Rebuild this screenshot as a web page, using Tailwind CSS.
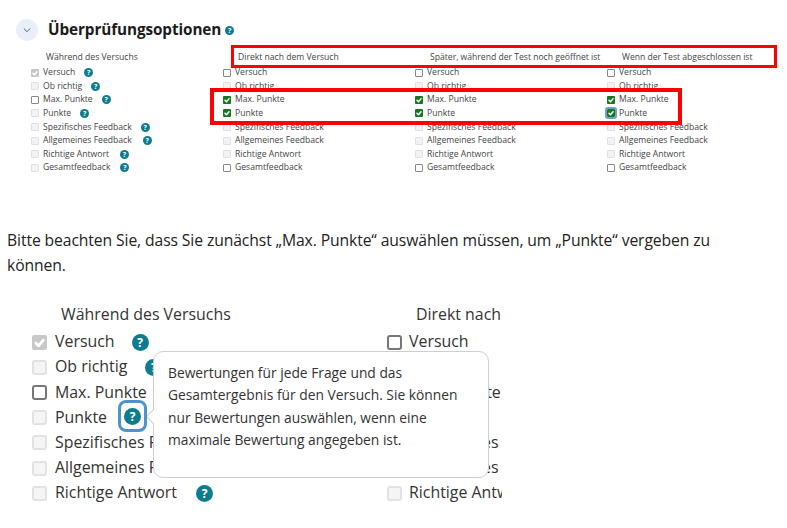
<!doctype html>
<html>
<head>
  <meta charset="UTF-8">
  <meta name="viewport" content="width=device-width, initial-scale=1.0">
  <script src="https://cdn.jsdelivr.net/npm/@tailwindcss/browser@4"></script>
</head>
<body class="bg-white">
  <div class="relative w-[787px] h-[528px] overflow-hidden font-['Open_Sans',sans-serif] text-[#2b2b2b]">

    <!-- Heading -->
    <div class="flex items-center h-[22px] mt-[19px] ml-[16px]">
      <div class="w-[22px] h-[22px] rounded-full bg-[#e9eff8] flex items-center justify-center">
        <svg class="w-[10px] h-[10px] text-[#1f4f9c]" fill="none" stroke="currentColor" stroke-width="2" stroke-linecap="round" stroke-linejoin="round" viewBox="0 0 24 24"><path d="M5 9l7 7 7-7"></path></svg>
      </div>
      <span class="ml-[10px] text-[15.3px] leading-none font-bold text-[#1b1b1b] tracking-[-0.1px]">Überprüfungsoptionen</span>
      <span class="ml-[4px] w-[9px] h-[9px] rounded-full bg-[#0f7c8e] text-white text-[7px] leading-[9px] font-bold text-center">?</span>
    </div>

    <!-- Small table -->
    <div id="small" class="grid grid-cols-[192px_192px_192px_180px] ml-[31px] mt-[9px] text-[8.6px] text-[#444]"></div>

    <!-- Note -->
    <p class="ml-[7px] mt-[53px] w-[760px] text-[15.7px] tracking-[-0.1px] leading-[25px] text-[#222]">Bitte beachten Sie, dass Sie zunächst „Max. Punkte“ auswählen müssen, um „Punkte“ vergeben zu können.</p>

    <!-- Large table -->
    <div id="large" class="grid grid-cols-[355px_118px] ml-[32px] mt-[26px] w-[470px] overflow-hidden text-[15.9px] text-[#333]"></div>

    <!-- Red highlight frames -->
    <div class="absolute left-[231px] top-[45px] w-[546px] h-[23px] border-[3px] border-[#ff0000]"></div>
    <div class="absolute left-[210px] top-[88px] w-[472px] h-[37px] border-[4px] border-[#ff0000]"></div>

    <!-- Tooltip -->
    <div class="absolute left-[153px] top-[351px] w-[336px] h-[127px] bg-white border border-[#cfcfcf] rounded-[10px] pl-[14px] pr-[22px] pt-[10px] text-[13.8px] leading-[22.3px] text-[#333]">
      Bewertungen für jede Frage und das Gesamtergebnis für den Versuch. Sie können nur Bewertungen auswählen, wenn eine maximale Bewertung angegeben ist.
      <div class="absolute left-[-6px] top-[59px] w-[11px] h-[11px] rotate-45 bg-white border-l border-b border-[#cfcfcf]"></div>
    </div>
    <div class="absolute left-[118px] top-[400px] w-[29px] h-[32px] rounded-[8px] border-[3px] border-[#4f93cc] flex items-center justify-center">
      <span class="w-[17px] h-[17px] rounded-full bg-[#0f7c8e] text-white text-[12px] leading-[17px] font-bold text-center">?</span>
    </div>
  </div>

  <script>
    const rows = ['Versuch', 'Ob richtig', 'Max. Punkte', 'Punkte', 'Spezifisches Feedback', 'Allgemeines Feedback', 'Richtige Antwort', 'Gesamtfeedback'];
    const tick = '<svg viewBox="0 0 16 16" class="w-full h-full" fill="none" stroke="currentColor" stroke-width="3" stroke-linecap="round" stroke-linejoin="round"><path d="M4 8.5l3 3 5-6"></path></svg>';

    function smallBox(kind) {
      if (kind === 'g') return `<span class="block w-[8px] h-[8px] rounded-[1px] bg-[#c8c8c8] text-white">${tick}</span>`;
      if (kind === 'c') return `<span class="block w-[8px] h-[8px] rounded-[1px] bg-[#157a1f] text-white">${tick}</span>`;
      if (kind === 'f') return `<span class="block w-[8px] h-[8px] rounded-[1px] bg-[#157a1f] text-white outline-2 outline-[#6f9fd0]">${tick}</span>`;
      if (kind === 'o') return '<span class="block w-[8px] h-[8px] rounded-[1px] bg-white border border-[#888]"></span>';
      return '<span class="block w-[8px] h-[8px] rounded-[1px] bg-[#f3f3f3] border border-[#e0e0e0]"></span>';
    }
    function smallHelp(gap) {
      return `<span class="w-[9px] h-[9px] rounded-full bg-[#0f7c8e] text-white text-[7px] leading-[9px] font-bold text-center" style="margin-left:${gap}px">?</span>`;
    }

    const smallKinds = [
      ['g', 'd', 'o', 'd', 'd', 'd', 'd', 'd'],
      ['o', 'd', 'c', 'c', 'd', 'd', 'd', 'o'],
      ['o', 'd', 'c', 'c', 'd', 'd', 'd', 'o'],
      ['o', 'd', 'c', 'f', 'd', 'd', 'd', 'o']
    ];
    const smallGaps = [9, 9, 9, 9, 9, 11, 11, 10];
    const heads = ['Während des Versuchs', 'Direkt nach dem Versuch', 'Später, während der Test noch geöffnet ist', 'Wenn der Test abgeschlossen ist'];

    let html = heads.map(h => `<div class="pl-[15px] h-[16px] whitespace-nowrap leading-[14px]">${h}</div>`).join('');
    rows.forEach((label, r) => {
      for (let c = 0; c < 4; c++) {
        html += `<div class="flex items-center h-[13.57px] whitespace-nowrap">${smallBox(smallKinds[c][r])}<span class="ml-[4px]">${label}</span>${c === 0 ? smallHelp(smallGaps[r]) : ''}</div>`;
      }
    });
    document.getElementById('small').innerHTML = html;

    function largeBox(kind) {
      if (kind === 'g') return `<span class="block shrink-0 w-[15px] h-[15px] rounded-[2px] bg-[#c8c8c8] text-white">${tick}</span>`;
      if (kind === 'o') return '<span class="block shrink-0 w-[15px] h-[15px] rounded-[3px] bg-white border-2 border-[#777]"></span>';
      return '<span class="block shrink-0 w-[15px] h-[15px] rounded-[3px] bg-[#f5f5f5] border-2 border-[#e2e2e2]"></span>';
    }
    function largeHelp(gap) {
      return `<span class="shrink-0 w-[17px] h-[17px] rounded-full bg-[#0f7c8e] text-white text-[12px] leading-[17px] font-bold text-center" style="margin-left:${gap}px">?</span>`;
    }
    const largeLeft = ['g', 'd', 'o', 'd', 'd', 'd', 'd'];
    const largeRight = ['o', 'd', 'd', 'd', 'd', 'd', 'd'];
    const largeGaps = [17, 18, 0, 0, 0, 0, 19];

    let big = '<div class="pl-[29px] h-[26px] leading-[20px] whitespace-nowrap">Während des Versuchs</div><div class="pl-[29px] h-[26px] leading-[20px] whitespace-nowrap">Direkt nach</div>';
    rows.slice(0, 7).forEach((label, r) => {
      big += `<div class="flex items-center h-[25.2px] whitespace-nowrap">${largeBox(largeLeft[r])}<span class="ml-[8px]">${label}</span>${largeGaps[r] ? largeHelp(largeGaps[r]) : ''}</div>`;
      big += `<div class="flex items-center h-[25.2px] whitespace-nowrap">${largeBox(largeRight[r])}<span class="ml-[7px]">${label}</span></div>`;
    });
    document.getElementById('large').innerHTML = big;
  </script>
</body>
</html>
